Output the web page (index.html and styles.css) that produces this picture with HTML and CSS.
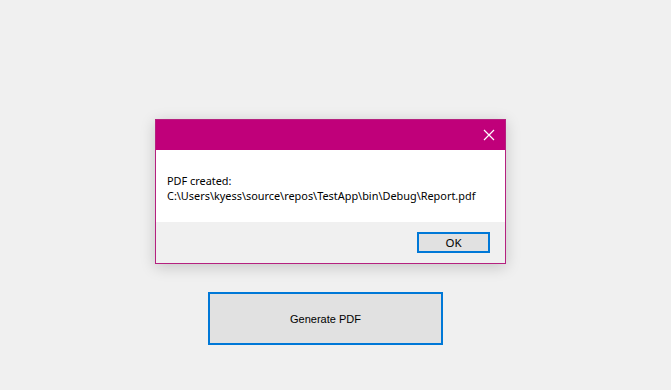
FILE: index.html
```html
<!DOCTYPE html>
<html lang="en">
<head>
    <meta charset="UTF-8">
    <title>TestApp</title>
    <link rel="stylesheet" href="styles.css">
</head>
<body>
    <div class="dialog">
        <div class="title-bar">
            <span class="close-btn">
                <svg width="12" height="12" viewBox="0 0 12 12"><path d="M1 1L11 11M11 1L1 11" stroke="#fff" stroke-width="1.2"/></svg>
            </span>
        </div>
        <div class="message">
            <p>PDF created:<br>C:\Users\kyess\source\repos\TestApp\bin\Debug\Report.pdf</p>
        </div>
        <div class="button-row">
            <button class="ok-btn">OK</button>
        </div>
    </div>
    <button class="generate-btn">Generate PDF</button>
</body>
</html>
```

FILE: styles.css
```css
body {
    margin: 0;
    padding: 119px 0 0 0;
    background: #f0f0f0;
    font-family: 'Noto Sans', sans-serif;
    height: 390px;
    box-sizing: border-box;
    overflow: hidden;
}
.dialog {
    margin-left: 155px;
    width: 351px;
    border: 1px solid #b5217f;
    box-sizing: border-box;
    background: #f0f0f0;
    box-shadow: 0px 3px 14px rgba(0, 0, 0, 0.18);
}
.title-bar {
    height: 30px;
    background: #c0007a;
    display: flex;
    justify-content: flex-end;
    align-items: center;
    padding-right: 10px;
}
.close-btn {
    display: flex;
}
.message {
    background: #fff;
    height: 72px;
    padding: 0 11px;
    display: flex;
    align-items: center;
}
.message p {
    margin: 4px 0 0 0;
    font-size: 10.9px;
    line-height: 15px;
    color: #000;
}
.button-row {
    height: 41px;
    display: flex;
    justify-content: flex-end;
    align-items: flex-start;
    padding: 10px 15px 0 0;
    box-sizing: border-box;
}
.ok-btn {
    width: 73px;
    height: 21px;
    border: 2px solid #0078d7;
    background: #e1e1e1;
    font-family: 'Noto Sans', sans-serif;
    font-size: 11.5px;
    padding: 0;
    color: #000;
}
.generate-btn {
    display: block;
    margin: 28px 0 0 208px;
    width: 235px;
    height: 53px;
    border: 2px solid #0078d7;
    background: #e1e1e1;
    font-family: 'Liberation Sans', sans-serif;
    font-size: 11px;
    color: #000;
    padding: 0;
}
```
